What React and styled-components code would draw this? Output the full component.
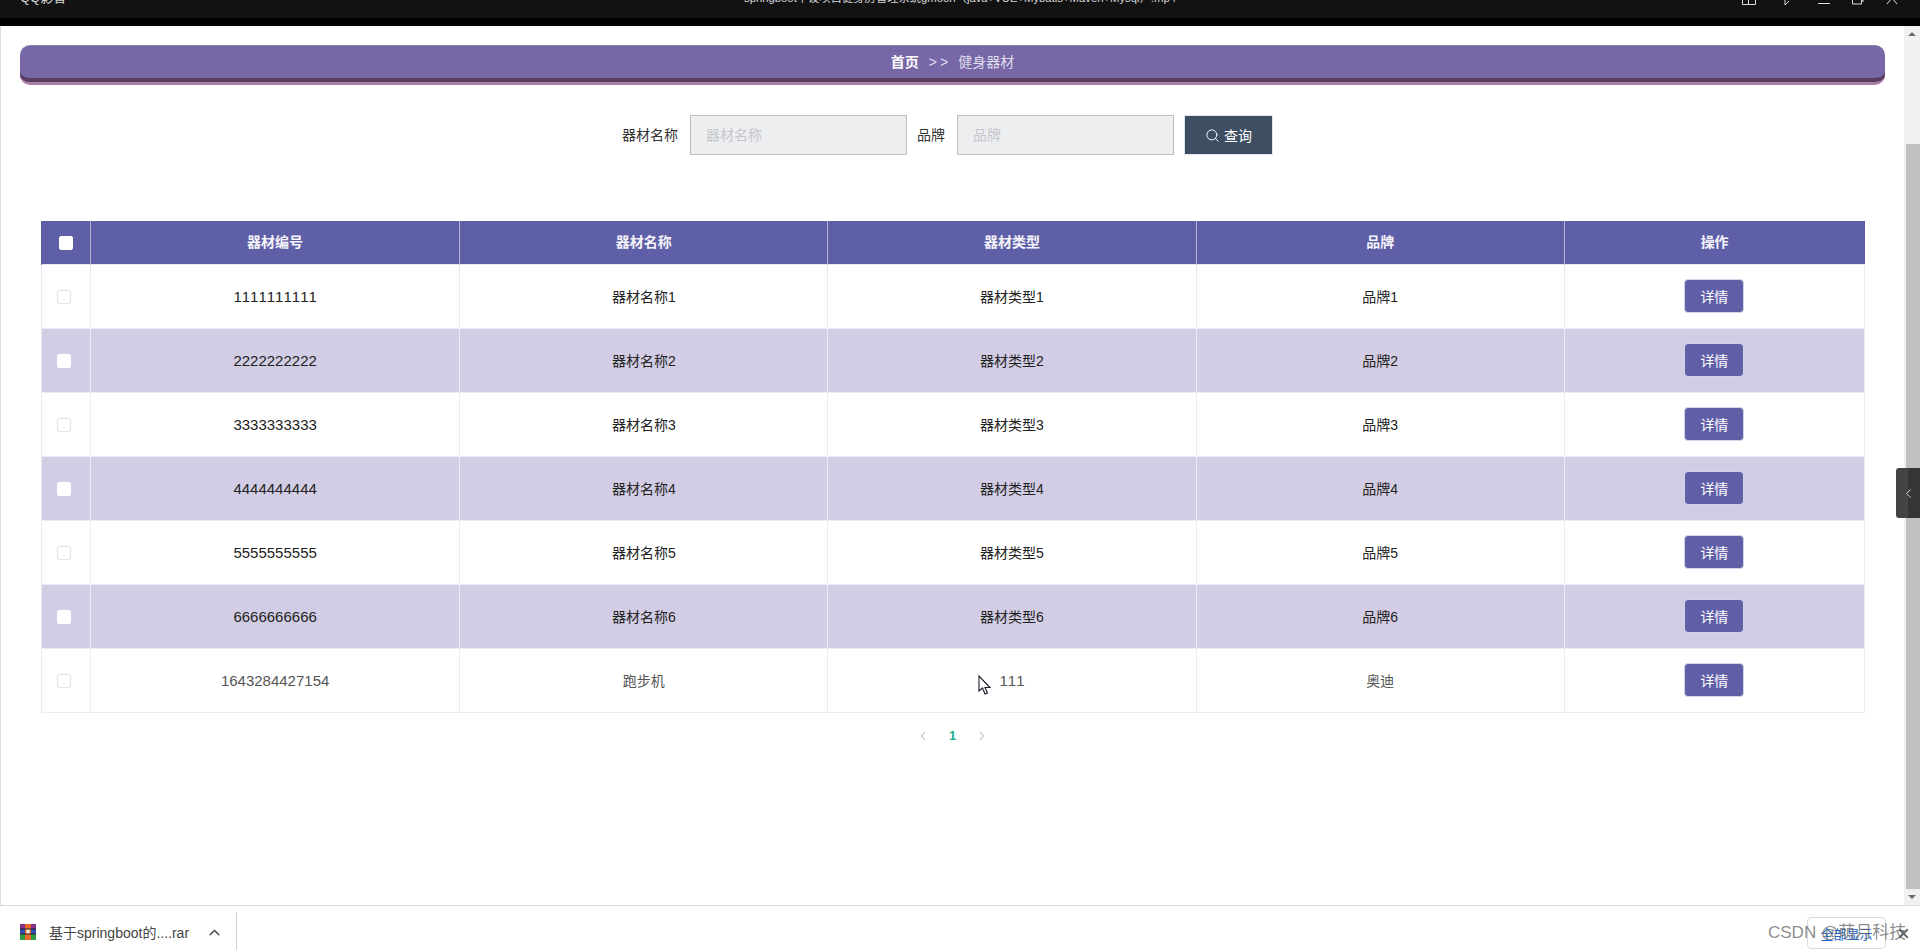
import styled, { createGlobalStyle } from "styled-components";
import { Search, ChevronLeft, ChevronRight, ChevronUp, X } from "lucide-react";

const GlobalStyle = createGlobalStyle`
  html, body {
    margin: 0;
    padding: 0;
    height: 100%;
    overflow: hidden;
    background: #fff;
    font-family: "Liberation Sans", "Noto Sans CJK SC", sans-serif;
  }
`;

const Page = styled.div`
  position: relative;
  display: flex;
  flex-direction: column;
  height: 950px;
  width: 1920px;
  overflow: hidden;
`;

const PlayerBar = styled.div`
  flex: none;
  height: 18px;
  background: #121212;
  border-bottom: 8px solid #000;
  display: grid;
  grid-template-columns: 1fr auto 1fr;
  align-items: start;
  overflow: hidden;
  color: #d8d8d8;
  line-height: 16px;
`;

const PlayerText = styled.div`
  margin-top: -10px;
  padding-left: ${(props) => props.$left || 0}px;
  font-size: ${(props) => props.$size}px;
`;

const WindowIcons = styled.div`
  justify-self: end;
  display: flex;
  align-items: flex-start;
  gap: 22px;
  margin-top: -6px;
  padding-right: 22px;
  & > svg:first-child {
    margin-right: 6px;
  }
`;

const Main = styled.div`
  flex: 1;
  display: flex;
  min-height: 0;
`;

const Content = styled.div`
  flex: 1;
  border-left: 1px solid #dcdcdc;
  min-width: 0;
`;

const Banner = styled.div`
  box-sizing: border-box;
  height: 40px;
  margin: 19px 19px 0;
  border-radius: 10px;
  background: #7767a6;
  border-top: 1px solid #8a84a8;
  border-bottom: 3px solid #a87ea8;
  box-shadow: inset 0 -4px 0 #5a3c5f;
  display: flex;
  justify-content: center;
  gap: 10px;
  color: #dfdcec;
  font-size: 14px;
  line-height: 32px;
`;

const Crumb = styled.span`
  font-weight: ${(props) => (props.$strong ? 700 : 400)};
  color: ${(props) => (props.$strong ? "#fff" : "#dfdcec")};
`;

const CrumbArrow = styled.span`
  letter-spacing: 3px;
  margin-right: -3px;
`;

const SearchRow = styled.div`
  display: flex;
  justify-content: center;
  align-items: center;
  margin-top: 30px;
  padding-right: 10px;
  height: 40px;
`;

const FieldLabel = styled.label`
  font-size: 14px;
  color: #333;
  margin: 0 12px 2px 0;
`;

const FieldInput = styled.input`
  box-sizing: border-box;
  width: ${(props) => props.$width}px;
  height: 40px;
  margin-right: ${(props) => props.$gap}px;
  padding: 0 15px;
  border: 1px solid #bdbdbd;
  border-radius: 0;
  background: #edeef0;
  font-family: inherit;
  font-size: 14px;
  &::placeholder {
    color: #c5c6cc;
    opacity: 1;
  }
`;

const SearchButton = styled.button`
  box-sizing: border-box;
  width: 89px;
  height: 40px;
  display: flex;
  align-items: center;
  justify-content: center;
  gap: 4px;
  border: 1px solid #dfe3ea;
  background: #3f4f63;
  color: #fff;
  font-family: inherit;
  font-size: 14px;
  padding: 0;
`;

const Table = styled.table`
  width: 1824px;
  margin: 66px 0 0 40px;
  border-collapse: collapse;
  table-layout: fixed;
  text-align: center;
  font-kerning: none;
`;

const HeadCell = styled.th`
  height: 43px;
  padding: 0 0 2px;
  box-sizing: border-box;
  background: #5f5fa7;
  color: #f4f4fa;
  font-size: 14px;
  font-weight: 700;
  border-left: 1px solid ${(props) => (props.$first ? "#5f5fa7" : "#b4b4d2")};
`;

const Row = styled.tr`
  background: ${(props) => (props.$striped ? "#d2cde4" : "#fff")};
`;

const Cell = styled.td`
  height: 63px;
  padding: 0;
  border: 1px solid #ebebf3;
  color: ${(props) => (props.$muted ? "#555" : "#222")};
  font-size: ${(props) => (props.$digits ? 15 : 14)}px;
`;

const Check = styled.span`
  display: inline-block;
  vertical-align: middle;
  box-sizing: border-box;
  width: 14px;
  height: 14px;
  border-radius: 2px;
  background: #fff;
  border: 1px solid ${(props) => (props.$plain ? "#fff" : "#e3e3ea")};
  margin-right: ${(props) => (props.$head ? 1 : 5)}px;
  margin-top: ${(props) => (props.$head ? 2 : 0)}px;
`;

const DetailButton = styled.button`
  box-sizing: border-box;
  width: 60px;
  height: 34px;
  margin-bottom: 1px;
  border: 1px solid #d5d4e8;
  border-radius: 4px;
  background: #5f5ea6;
  color: #fff;
  font-family: inherit;
  font-size: 14px;
  padding: 0;
  vertical-align: middle;
`;

const Pager = styled.div`
  display: flex;
  justify-content: center;
  align-items: center;
  gap: 19px;
  margin-top: 14px;
  height: 18px;
  color: #c8c8d0;
`;

const PageNumber = styled.span`
  color: #1aaf8b;
  font-size: 13px;
  font-weight: 700;
`;

const Scrollbar = styled.div`
  flex: none;
  width: 16px;
  background: #f1f1f1;
  display: flex;
  flex-direction: column;
  align-items: stretch;
`;

const ScrollArrow = styled.div`
  flex: none;
  height: 16px;
  display: flex;
  align-items: center;
  justify-content: center;
  &::after {
    content: "";
    border-left: 4px solid transparent;
    border-right: 4px solid transparent;
    ${(props) => (props.$down ? "border-top" : "border-bottom")}: 4px solid #6f6f6f;
  }
`;

const ScrollThumb = styled.div`
  flex: 1;
  margin: 102px 0 0 2px;
  background: #c1c1c1;
`;

const SideHandle = styled.div`
  position: absolute;
  right: 0;
  top: 468px;
  width: 24px;
  height: 50px;
  border-radius: 3px 0 0 3px;
  background: linear-gradient(90deg, #444 0 50%, #353535 50%);
  color: #ddd;
  display: flex;
  align-items: center;
  justify-content: center;
`;

const Pointer = styled.svg`
  position: absolute;
  left: 978px;
  top: 675px;
`;

const DownloadBar = styled.div`
  flex: none;
  box-sizing: border-box;
  height: 45px;
  border-top: 1px solid #dadada;
  background: #fff;
  display: flex;
  align-items: stretch;
  padding-top: 6px;
`;

const DownloadItem = styled.div`
  box-sizing: border-box;
  width: 237px;
  padding: 2px 0 0 20px;
  border-right: 1px solid #cfcfcf;
  display: flex;
  align-items: center;
  font-size: 14px;
  color: #444;
`;

const DownloadName = styled.span`
  margin-left: 13px;
  margin-right: 17px;
  white-space: nowrap;
`;

const ShowAll = styled.button`
  box-sizing: border-box;
  width: 79px;
  height: 32px;
  margin: 5px 0 0 auto;
  border: 1px solid #dadce0;
  border-radius: 4px;
  background: #fff;
  color: #1a67c9;
  font-family: inherit;
  font-size: 13px;
  padding: 0;
`;

const CloseBar = styled.div`
  width: 34px;
  display: flex;
  align-items: center;
  justify-content: center;
  color: #666;
  margin-top: 4px;
`;

const Watermark = styled.div`
  position: absolute;
  left: 1768px;
  top: 922px;
  font-size: 17px;
  line-height: 22px;
  color: rgba(95, 95, 95, 0.72);
  white-space: nowrap;
`;

const rows = [
  ["1111111111", "器材名称1", "器材类型1", "品牌1"],
  ["2222222222", "器材名称2", "器材类型2", "品牌2"],
  ["3333333333", "器材名称3", "器材类型3", "品牌3"],
  ["4444444444", "器材名称4", "器材类型4", "品牌4"],
  ["5555555555", "器材名称5", "器材类型5", "品牌5"],
  ["6666666666", "器材名称6", "器材类型6", "品牌6"],
  ["1643284427154", "跑步机", "111", "奥迪"],
];

const heads = ["器材编号", "器材名称", "器材类型", "品牌", "操作"];

function RarIcon() {
  return (
    <svg width="16" height="16" viewBox="0 0 16 16">
      <rect x="0" y="0" width="16" height="5" fill="#8b2f8f" />
      <rect x="0" y="5" width="16" height="5" fill="#2f4fb5" />
      <rect x="0" y="10" width="16" height="6" fill="#2e9a3f" />
      <rect x="5" y="0" width="6" height="16" fill="#e8672a" />
      <rect x="6.5" y="5" width="3" height="5" fill="#f4f0e0" />
      <rect x="0" y="4.5" width="16" height="1" fill="#222" />
      <rect x="0" y="9.5" width="16" height="1" fill="#222" />
    </svg>
  );
}

function TopIcons() {
  return (
    <WindowIcons>
      <svg width="14" height="11" viewBox="0 0 14 11" fill="none" stroke="#ddd" strokeWidth="1">
        <path d="M.5 0v10.5h6V5h7v5.500h-7" />
      </svg>
      <svg width="12" height="11" viewBox="0 0 12 11" fill="none" stroke="#ddd" strokeWidth="1">
        <path d="M1 11V5l9-1M1 11l4-4" />
      </svg>
      <svg width="12" height="11" viewBox="0 0 12 11" fill="none" stroke="#ddd" strokeWidth="1">
        <path d="M0 9.500h12" />
      </svg>
      <svg width="12" height="11" viewBox="0 0 12 11" fill="none" stroke="#ddd" strokeWidth="1">
        <path d="M.5 3v7h9V3M10 1.500V7h2" />
      </svg>
      <svg width="12" height="11" viewBox="0 0 12 11" fill="none" stroke="#ddd" strokeWidth="1">
        <path d="M1 10l5-6 5 6" />
      </svg>
    </WindowIcons>
  );
}

export default function App() {
  return (
    <Page>
      <GlobalStyle />
      <PlayerBar>
        <PlayerText $left={20} $size={13}>QQ影音</PlayerText>
        <PlayerText $size={11.3}>springboot毕设项目健身房管理系统gmoon（java+VUE+Mybatis+Maven+Mysql）.mp4</PlayerText>
        <TopIcons />
      </PlayerBar>
      <Main>
        <Content>
          <Banner>
            <Crumb $strong>首页</Crumb>
            <CrumbArrow>&gt;&gt;</CrumbArrow>
            <Crumb>健身器材</Crumb>
          </Banner>
          <SearchRow>
            <FieldLabel>器材名称</FieldLabel>
            <FieldInput $width={217} $gap={10} placeholder="器材名称" />
            <FieldLabel>品牌</FieldLabel>
            <FieldInput $width={217} $gap={10} placeholder="品牌" />
            <SearchButton>
              <Search size={15} strokeWidth={1.5} />
              查询
            </SearchButton>
          </SearchRow>
          <Table>
            <colgroup>
              <col width="49" />
              <col width="369" />
              <col width="368" />
              <col width="368" />
              <col width="368" />
              <col width="300" />
            </colgroup>
            <thead>
              <tr>
                <HeadCell $first>
                  <Check $head $plain />
                </HeadCell>
                {heads.map((head) => (
                  <HeadCell key={head}>{head}</HeadCell>
                ))}
              </tr>
            </thead>
            <tbody>
              {rows.map((row, index) => (
                <Row key={row[0]} $striped={index % 2 === 1}>
                  <Cell>
                    <Check $plain={index % 2 === 1} />
                  </Cell>
                  {row.map((value, column) => (
                    <Cell key={column} $digits={/^\d+$/.test(value)} $muted={index === 6}>
                      {value}
                    </Cell>
                  ))}
                  <Cell>
                    <DetailButton>详情</DetailButton>
                  </Cell>
                </Row>
              ))}
            </tbody>
          </Table>
          <Pager>
            <ChevronLeft size={14} />
            <PageNumber>1</PageNumber>
            <ChevronRight size={14} />
          </Pager>
        </Content>
        <Scrollbar>
          <ScrollArrow />
          <ScrollThumb />
          <ScrollArrow $down />
        </Scrollbar>
      </Main>
      <DownloadBar>
        <DownloadItem>
          <RarIcon />
          <DownloadName>基于springboot的....rar</DownloadName>
          <ChevronUp size={17} color="#666" strokeWidth={2.5} />
        </DownloadItem>
        <ShowAll>全部显示</ShowAll>
        <CloseBar>
          <X size={15} strokeWidth={3} />
        </CloseBar>
      </DownloadBar>
      <SideHandle>
        <ChevronLeft size={15} strokeWidth={1.5} />
      </SideHandle>
      <Pointer width="14" height="20" viewBox="0 0 14 20">
        <path d="M1 1v15l3.500-3 2.500 6 2.500-1-2.500-5.500H12z" fill="#fff" stroke="#1c1c2a" strokeWidth="1.100" />
      </Pointer>
      <Watermark>CSDN @萌月科技</Watermark>
    </Page>
  );
}
